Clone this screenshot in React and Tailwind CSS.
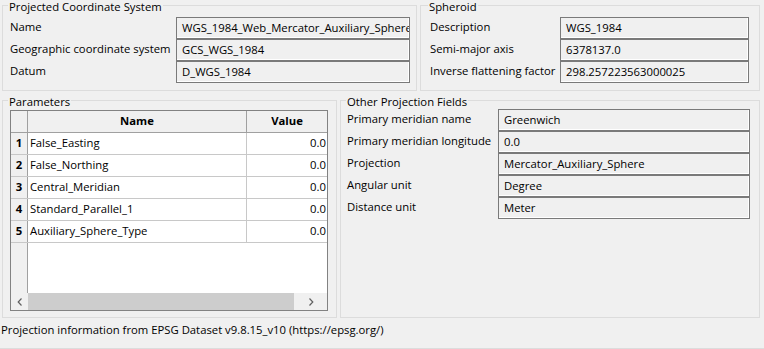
import React from 'react';

const font = { fontFamily: '"Segoe UI", "Open Sans", sans-serif' };

const Field = ({ children, className = '' }) => (
  <div className={`h-[22px] border border-[#7a7a7a] shadow-[inset_-1px_-1px_0_#ffffff] flex items-center px-[5px] whitespace-nowrap overflow-hidden ${className}`}>
    {children}
  </div>
);

const Group = ({ title, legendClass = 'ml-[5px]', className = '', children }) => (
  <fieldset className={`border border-[#dcdcdc] ${className}`}>
    <legend className={`px-[1px] pt-[2px] leading-[9px] ${legendClass}`}>{title}</legend>
    {children}
  </fieldset>
);

const params = [
  ['False_Easting', '0.0'],
  ['False_Northing', '0.0'],
  ['Central_Meridian', '0.0'],
  ['Standard_Parallel_1', '0.0'],
  ['Auxiliary_Sphere_Type', '0.0'],
];

const Chevron = ({ dir }) => (
  <svg width="6" height="8" viewBox="0 0 6 8" className="shrink-0">
    {dir === 'left' ? (
      <path d="M4.5 0.5 L1.2 4 L4.5 7.5" fill="none" stroke="#606060" strokeWidth="1.2" />
    ) : (
      <path d="M1.5 0.5 L4.8 4 L1.5 7.5" fill="none" stroke="#606060" strokeWidth="1.2" />
    )}
  </svg>
);

export default function App() {
  return (
    <div className="w-[764px] h-[349px] bg-[#f0f0f0] text-[11.3px] text-black overflow-hidden flex flex-col" style={font}>
      {/* top row */}
      <div className="flex pl-[2px] gap-[3px] h-[91px]">
        <Group title="Projected Coordinate System" className="w-[415px] h-[91px]">
          <div className="flex flex-col mt-[6px] pl-[7px]">
            {[
              ['Name', 'WGS_1984_Web_Mercator_Auxiliary_Sphere'],
              ['Geographic coordinate system', 'GCS_WGS_1984'],
              ['Datum', 'D_WGS_1984'],
            ].map(([label, value]) => (
              <div key={label} className="flex items-center">
                <div className="w-[166px] -mt-[2px]">{label}</div>
                <Field className="w-[234px]">{value}</Field>
              </div>
            ))}
          </div>
        </Group>
        <Group title="Spheroid" legendClass="ml-[7px]" className="w-[340px] h-[91px]">
          <div className="flex flex-col mt-[6px] pl-[9px]">
            {[
              ['Description', 'WGS_1984'],
              ['Semi-major axis', '6378137.0'],
              ['Inverse flattening factor', '298.257223563000025'],
            ].map(([label, value]) => (
              <div key={label} className="flex items-center">
                <div className="w-[130px] -mt-[2px]">{label}</div>
                <Field className="w-[189px]">{value}</Field>
              </div>
            ))}
          </div>
        </Group>
      </div>

      {/* bottom row */}
      <div className="flex pl-[2px] gap-[3px] mt-[4px] h-[223px]">
        <Group title="Parameters" className="w-[335px] h-[223px]">
          <div className="mt-[4px] ml-[7px] w-[318px] h-[201px] border border-[#828282] bg-white flex flex-col">
            <div className="grid grid-cols-[17px_219px_80px] h-[22px] bg-[#f0f0f0] border-b border-[#a0a0a0] font-bold">
              <div className="border-r border-[#a0a0a0]" />
              <div className="flex items-center justify-center border-r border-[#a0a0a0]">Name</div>
              <div className="flex items-center justify-center">Value</div>
            </div>
            <div className="flex-1 flex flex-col">
              {params.map(([name, value], i) => (
                <div key={name} className="grid grid-cols-[17px_219px_80px] h-[22px] border-b border-[#c8c8c8]">
                  <div className="bg-[#f0f0f0] border-r border-[#a0a0a0] flex items-center justify-center font-bold">{i + 1}</div>
                  <div className="flex items-center pl-[2px] border-r border-[#c8c8c8]">{name}</div>
                  <div className="flex items-center justify-end pr-[1px]">{value}</div>
                </div>
              ))}
              <div className="flex-1 flex">
                <div className="w-[17px] bg-[#f0f0f0] border-r border-[#a0a0a0]" />
              </div>
            </div>
            <div className="h-[17px] bg-[#f0f0f0] flex items-center">
              <div className="w-[17px] flex justify-center"><Chevron dir="left" /></div>
              <div className="w-[266px] h-[17px] bg-[#cdcdcd]" />
              <div className="flex-1 flex justify-center"><Chevron dir="right" /></div>
            </div>
          </div>
        </Group>
        <Group title="Other Projection Fields" className="w-[420px] h-[223px]">
          <div className="flex flex-col mt-[3px] pl-[6px]">
            {[
              ['Primary meridian name', 'Greenwich'],
              ['Primary meridian longitude', '0.0'],
              ['Projection', 'Mercator_Auxiliary_Sphere'],
              ['Angular unit', 'Degree'],
              ['Distance unit', 'Meter'],
            ].map(([label, value]) => (
              <div key={label} className="flex items-center">
                <div className="w-[151px] -mt-[2px]">{label}</div>
                <Field className="w-[252px]">{value}</Field>
              </div>
            ))}
          </div>
        </Group>
      </div>

      {/* status */}
      <div className="flex-1 flex items-center pl-[1px] pb-[6px] border-b border-[#dcdcdc]">
        Projection information from EPSG Dataset v9.8.15_v10 (https://epsg.org/)
      </div>
    </div>
  );
}
